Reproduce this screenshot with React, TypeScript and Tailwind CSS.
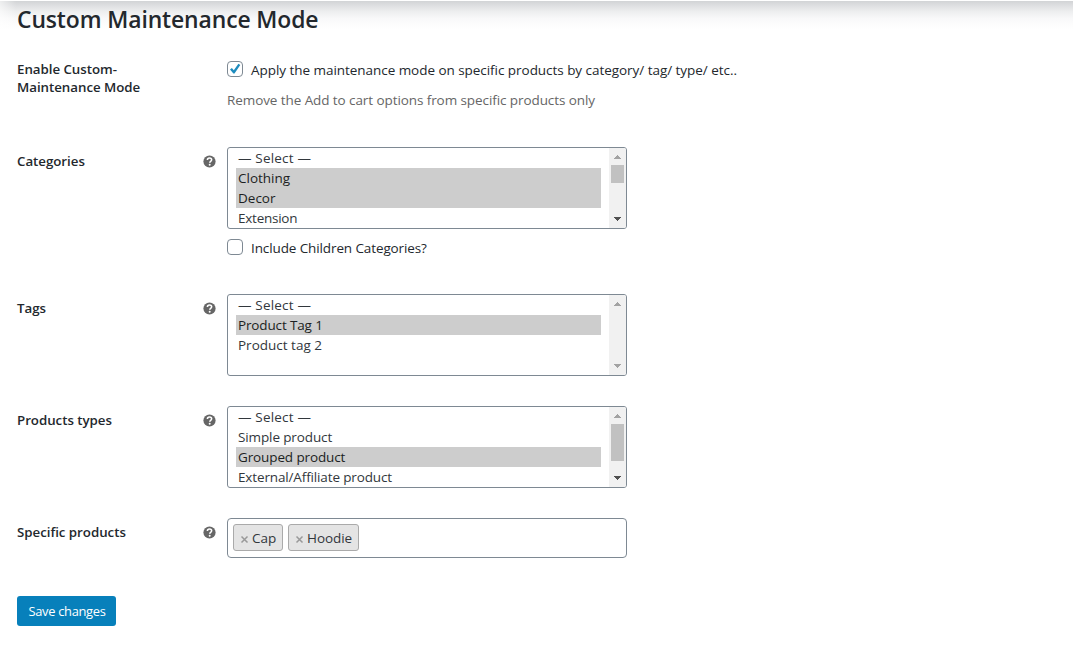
import { ReactNode } from "react";

function Help() {
  return (
    <svg width="13" height="13" viewBox="0 0 20 20" className="mt-[8px] shrink-0" aria-hidden="true">
      <circle cx="10" cy="10" r="9.4" fill="#666" />
      <path d="M6.8 7.6c0-2 1.4-3 3.2-3s3.3 1.1 3.3 2.8c0 2.3-2.9 2.4-2.9 4.6" fill="none" stroke="#fff" strokeWidth="2.4" />
      <circle cx="10.3" cy="15" r="1.5" fill="#fff" />
    </svg>
  );
}

function Row({ label, help, children, className }: { label: ReactNode; help?: boolean; children: ReactNode; className: string }) {
  return (
    <div className={`flex ${className}`}>
      <div className="flex w-[210px] shrink-0 justify-between pr-[11px]">
        <div className="pt-[5px] text-[13.3px] leading-[18px] font-semibold tracking-[-0.03px] text-[#23282d]">{label}</div>
        {help && <Help />}
      </div>
      <div>{children}</div>
    </div>
  );
}

function Check({ checked, children, tracking }: { checked?: boolean; children: string; tracking: string }) {
  return (
    <div className="flex h-5 items-center">
      <span className="-mt-[2px] flex size-4 shrink-0 items-center justify-center rounded-[4px] border border-[#7e8993] bg-white">
        {checked && (
          <svg width="12" height="12" viewBox="0 0 12 12">
            <path d="M1 6.4 2.9 5l1.9 2.2L9.4.8l1.9 1.1L5.5 10.6H4.4z" fill="#1e8cbe" />
          </svg>
        )}
      </span>
      <span className={`ml-2 text-[13.5px] leading-5 whitespace-nowrap ${tracking}`}>{children}</span>
    </div>
  );
}

type Option = { text: string; on?: boolean; tracking?: string };

function ListBox({ options, thumb, scrolls }: { options: Option[]; thumb?: string; scrolls?: boolean }) {
  return (
    <div className="flex h-[82px] w-[400px] overflow-hidden rounded-[3px] border border-[#7e8993] bg-white">
      <div className="w-[381px] pr-2 pl-2">
        {options.map((o) => (
          <div
            key={o.text}
            className={`h-5 pl-[2px] text-[13.5px] leading-5 ${o.tracking ?? ""} ${o.on ? "bg-[#cdcdcd] text-[#1c1f22]" : "text-[#32373c]"}`}
          >
            {o.text}
          </div>
        ))}
      </div>
      <div className="flex w-[17px] flex-col items-center bg-[#f1f1f1]">
        <svg width="17" height="17" viewBox="0 0 17 17" shapeRendering="crispEdges">
          <path d="M5 11h7L8.5 7z" fill="#a3a3a3" />
        </svg>
        <div className={`w-[13px] bg-[#c1c1c1] ${thumb ?? ""}`} />
        <svg className="mt-auto" width="17" height="17" viewBox="0 0 17 17" shapeRendering="crispEdges">
          <path d="M5 6h7l-3.5 4z" fill={scrolls ? "#505050" : "#a3a3a3"} />
        </svg>
      </div>
    </div>
  );
}

function Tag({ children, className }: { children: string; className: string }) {
  return (
    <span className={`flex h-[27px] items-center rounded-[3px] border border-[#aaa] bg-[#e4e4e4] pt-px pl-[6px] text-[13.5px] text-[#32373c] ${className}`}>
      <svg width="9" height="9" viewBox="0 0 9 9" className="mt-[2px] mr-[3px]">
        <path d="M1.5 1.5l6 6M7.5 1.5l-6 6" stroke="#999" strokeWidth="1.5" />
      </svg>
      {children}
    </span>
  );
}

export default function App() {
  return (
    <div className="h-[672px] overflow-hidden bg-white font-['Open_Sans','Noto_Sans',sans-serif] text-[#23282d]">
      <div className="h-px bg-white" />
      <div className="h-[30px] bg-[linear-gradient(to_right,rgba(255,255,255,0.6),rgba(255,255,255,0)_16px),linear-gradient(to_bottom,#d2d4d6,#dfe0e2_5px,#eeeff0_11px,#f9f9fa_18px,#fff_28px)]" />
      <div className="-mt-[31px] pl-[17px]">
        <h1 className="h-[55px] pt-[5px] text-[22.9px] leading-[30px] font-[550] tracking-[-0.11px] whitespace-nowrap">Custom Maintenance Mode</h1>
        <Row className="h-[101px]" label={<>Enable Custom-<br />Maintenance Mode</>}>
          <div className="mt-[5px]">
            <Check checked tracking="tracking-[-0.043px]">Apply the maintenance mode on specific products by category/ tag/ type/ etc..</Check>
          </div>
          <p className="mt-[10px] text-[13.5px] leading-5 tracking-[-0.083px] text-[#666]">Remove the Add to cart options from specific products only</p>
        </Row>
        <Row className="-mt-[9px] h-[147px]" help label="Categories">
          <ListBox
            scrolls
            thumb="h-[18px]"
            options={[
              { text: "— Select —", tracking: "tracking-[0.18px]" },
              { text: "Clothing", on: true },
              { text: "Decor", on: true },
              { text: "Extension", tracking: "tracking-[-0.25px]" },
            ]}
          />
          <div className="mt-[9px]">
            <Check tracking="tracking-[-0.11px]">Include Children Categories?</Check>
          </div>
        </Row>
        <Row className="h-[112px]" help label="Tags">
          <ListBox
            options={[
              { text: "— Select —", tracking: "tracking-[0.18px]" },
              { text: "Product Tag 1", on: true, tracking: "tracking-[-0.14px]" },
              { text: "Product tag 2" },
            ]}
          />
        </Row>
        <Row className="h-[112px]" help label="Products types">
          <ListBox
            scrolls
            thumb="h-[37px]"
            options={[
              { text: "— Select —", tracking: "tracking-[0.18px]" },
              { text: "Simple product", tracking: "tracking-[-0.12px]" },
              { text: "Grouped product", on: true, tracking: "tracking-[-0.12px]" },
              { text: "External/Affiliate product", tracking: "tracking-[-0.14px]" },
            ]}
          />
        </Row>
        <Row className="h-[78px]" help label="Specific products">
          <div className="flex h-10 w-[400px] gap-[5px] rounded-[4px] border border-[#7e8993] p-[5px]">
            <Tag className="w-[50px]">Cap</Tag>
            <Tag className="w-[71px] tracking-[-0.05px]">Hoodie</Tag>
          </div>
        </Row>
        <button className="flex h-[30px] w-[99px] items-center justify-center rounded-[3px] bg-[#0780bb] pt-px pl-px text-[12.9px] tracking-[-0.3px] text-white">Save changes</button>
      </div>
    </div>
  );
}
